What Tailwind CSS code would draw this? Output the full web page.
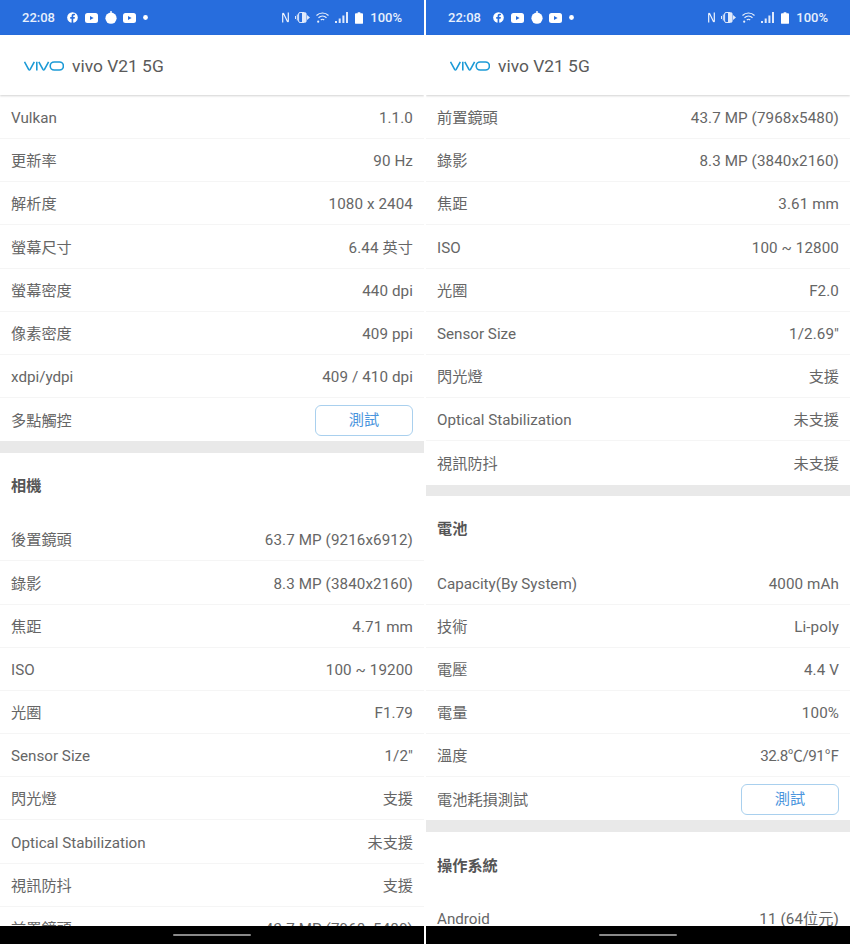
<!DOCTYPE html>
<html lang="zh-Hant">
<head>
  <meta charset="UTF-8" />
  <title>vivo V21 5G</title>
  <script src="https://cdn.jsdelivr.net/npm/@tailwindcss/browser@4"></script>
</head>
<body class="bg-white font-['Roboto','Noto_Sans_CJK_TC',sans-serif] text-[15.2px] text-[#666666]">
  <div class="flex w-[850px] h-[944px] gap-[2px] overflow-hidden">

    <!-- left phone -->
    <section class="relative w-[424px] h-[944px] overflow-hidden flex flex-col">
      <div class="h-[35px] shrink-0 bg-[#276ddd] text-white flex items-center justify-between px-[22px] text-[13px] font-medium">
        <div class="flex items-center">
          <span class="text-[#e8f0fc]">22:08</span>
          <div class="flex items-center ml-[12px]">
            <svg width="11" height="11" viewBox="0 0 12 12"><circle cx="6" cy="6" r="5.8" fill="#fff"/><path d="M6.800 12V7.300h1.500l.3-1.800H6.800V4.500c0-.6.2-.9.9-.9h1V2.100c-.3 0-.9-.1-1.400-.1C5.900 2 5 2.800 5 4.300v1.200H3.500v1.800H5V12z" fill="#276ddd"/></svg>
            <svg class="ml-[7px]" width="13" height="10" viewBox="0 0 13 10"><rect width="13" height="10" rx="2.500" fill="#fff"/><path d="M5 2.900v4.200L8.600 5z" fill="#276ddd"/></svg>
            <svg class="ml-[7px]" width="12" height="13" viewBox="0 0 12 13"><circle cx="6" cy="7.200" r="5.600" fill="#fff"/><rect x="5.300" y="0" width="1.400" height="2.500" fill="#fff"/></svg>
            <svg class="ml-[6px]" width="13" height="10" viewBox="0 0 13 10"><rect width="13" height="10" rx="2.500" fill="#fff"/><path d="M5 2.900v4.200L8.600 5z" fill="#276ddd"/></svg>
            <svg class="ml-[7px]" width="5" height="5" viewBox="0 0 5 5"><circle cx="2.500" cy="2.500" r="2.400" fill="#fff"/></svg>
          </div>
        </div>
        <div class="flex items-center">
          <svg width="7" height="11" viewBox="0 0 7 11" fill="none" stroke="#eef3fd" stroke-width="1.200"><path d="M.7 10.400V1.800a.5.500 0 0 1 .9-.3l3.800 8a.5.500 0 0 0 .9-.3V.6"/></svg>
          <svg class="ml-[6px]" width="15" height="11" viewBox="0 0 15 11" fill="#dfe9fb"><rect x="3.600" y="0.500" width="7.500" height="10" rx="1.500" fill="none" stroke="#dfe9fb"/><rect x="7" y="1" width="4" height="9"/><rect x="1.800" y="2.500" width="1" height="6"/><rect x="0" y="4" width="1" height="3"/><path d="M12 3l3 2.500L12 8z"/></svg>
          <svg class="ml-[6px]" width="13" height="11" viewBox="0 0 13 11" fill="none" stroke="#e8f0fc" stroke-width="1.200"><path d="M.5 3.500a8.500 8.500 0 0 1 12 0M2.500 5.700a6 6 0 0 1 8 0M4.800 7.900a2.800 2.800 0 0 1 3.400 0"/><circle cx="2.200" cy="9.700" r="1.100" fill="#e8f0fc" stroke="none"/></svg>
          <svg class="ml-[6px]" width="13" height="11" viewBox="0 0 13 11" fill="#dfe9fb"><rect x="0" y="9" width="2" height="2"/><rect x="3.700" y="6.500" width="2" height="4.500"/><rect x="7.400" y="3.500" width="2" height="7.500"/><rect x="11" y="0" width="2" height="11"/></svg>
          <svg class="ml-[7px]" width="8" height="12" viewBox="0 0 9 13" fill="#fff"><path d="M3 0h3v1.200h2a1 1 0 0 1 1 1V12a1 1 0 0 1-1 1H1a1 1 0 0 1-1-1V2.200a1 1 0 0 1 1-1h2z"/></svg>
          <span class="ml-[7px] text-[#e8f0fc]">100%</span>
        </div>
      </div>
      <header class="relative z-10 h-[60px] shrink-0 bg-white flex items-center pl-[24px] pt-[2px] shadow-[0_1px_2px_rgba(0,0,0,0.18)]">
        <svg width="40" height="10" viewBox="0 0 40 10" fill="none" stroke="#1b9ad6" stroke-width="1.600"><path d="M0.500 .8 L4.600 8.400 Q5.400 9.500 6.200 8.400 L10.300 .8"/><path d="M12.800 .8V9.400"/><path d="M14.800 .8 L18.900 8.400 Q19.700 9.500 20.500 8.400 L24.600 .8"/><rect x="26.200" y="1" width="13.200" height="8" rx="4"/></svg>
        <span class="ml-[8px] text-[17.400px] text-[#5a5a5a]">vivo V21 5G</span>
      </header>
      <main class="flex-1 overflow-hidden pt-[0.900px] [&>div]:pt-[3px]">
        <div class="flex justify-between items-center h-[43.200px] px-[11px] border-b border-[#f5f5f5]"><span>Vulkan</span><span class="tracking-[0.1px]">1.1.0</span></div>
        <div class="flex justify-between items-center h-[43.200px] px-[11px] border-b border-[#f5f5f5]"><span>更新率</span><span class="tracking-[0.1px]">90 Hz</span></div>
        <div class="flex justify-between items-center h-[43.200px] px-[11px] border-b border-[#f5f5f5]"><span>解析度</span><span class="tracking-[0.1px]">1080 x 2404</span></div>
        <div class="flex justify-between items-center h-[43.200px] px-[11px] border-b border-[#f5f5f5]"><span>螢幕尺寸</span><span class="tracking-[0.1px]">6.44 英寸</span></div>
        <div class="flex justify-between items-center h-[43.200px] px-[11px] border-b border-[#f5f5f5]"><span>螢幕密度</span><span class="tracking-[0.1px]">440 dpi</span></div>
        <div class="flex justify-between items-center h-[43.200px] px-[11px] border-b border-[#f5f5f5]"><span>像素密度</span><span class="tracking-[0.1px]">409 ppi</span></div>
        <div class="flex justify-between items-center h-[43.200px] px-[11px] border-b border-[#f5f5f5]"><span>xdpi/ydpi</span><span class="tracking-[0.1px]">409 / 410 dpi</span></div>
        <div class="flex justify-between items-center h-[43.200px] px-[11px]"><span>多點觸控</span><button class="w-[98px] h-[31px] -mt-[2px] pt-[1px] rounded-[6px] border border-[#a9d0ee] text-[#4a95dd]">測試</button></div>
        <div class="h-[11.400px] bg-[#e9e9e9]"></div>
        <h2 class="h-[65.400px] flex items-center px-[11px] pt-[2px] font-bold text-[#555555]">相機</h2>
        <div class="flex justify-between items-center h-[43.200px] px-[11px] border-b border-[#f5f5f5]"><span>後置鏡頭</span><span class="tracking-[0.1px]">63.7 MP (9216x6912)</span></div>
        <div class="flex justify-between items-center h-[43.200px] px-[11px] border-b border-[#f5f5f5]"><span>錄影</span><span class="tracking-[0.1px]">8.3 MP (3840x2160)</span></div>
        <div class="flex justify-between items-center h-[43.200px] px-[11px] border-b border-[#f5f5f5]"><span>焦距</span><span class="tracking-[0.1px]">4.71 mm</span></div>
        <div class="flex justify-between items-center h-[43.200px] px-[11px] border-b border-[#f5f5f5]"><span>ISO</span><span class="tracking-[0.1px]">100 ~ 19200</span></div>
        <div class="flex justify-between items-center h-[43.200px] px-[11px] border-b border-[#f5f5f5]"><span>光圈</span><span class="tracking-[0.1px]">F1.79</span></div>
        <div class="flex justify-between items-center h-[43.200px] px-[11px] border-b border-[#f5f5f5]"><span>Sensor Size</span><span class="tracking-[0.1px]">1/2"</span></div>
        <div class="flex justify-between items-center h-[43.200px] px-[11px] border-b border-[#f5f5f5]"><span>閃光燈</span><span>支援</span></div>
        <div class="flex justify-between items-center h-[43.200px] px-[11px] border-b border-[#f5f5f5]"><span>Optical Stabilization</span><span>未支援</span></div>
        <div class="flex justify-between items-center h-[43.200px] px-[11px] border-b border-[#f5f5f5]"><span>視訊防抖</span><span>支援</span></div>
        <div class="flex justify-between items-center h-[43.200px] px-[11px] border-b border-[#f5f5f5]"><span>前置鏡頭</span><span class="tracking-[0.1px]">43.7 MP (7968x5480)</span></div>
      </main>
      <div class="absolute bottom-0 inset-x-0 h-[18px] bg-black flex justify-center items-center"><div class="w-[78px] h-[2px] rounded-full bg-[#8a8a8a]"></div></div>
    </section>

    <!-- right phone -->
    <section class="relative w-[424px] h-[944px] overflow-hidden flex flex-col">
      <div class="h-[35px] shrink-0 bg-[#276ddd] text-white flex items-center justify-between px-[22px] text-[13px] font-medium">
        <div class="flex items-center">
          <span class="text-[#e8f0fc]">22:08</span>
          <div class="flex items-center ml-[12px]">
            <svg width="11" height="11" viewBox="0 0 12 12"><circle cx="6" cy="6" r="5.8" fill="#fff"/><path d="M6.800 12V7.300h1.500l.3-1.800H6.800V4.500c0-.6.2-.9.9-.9h1V2.100c-.3 0-.9-.1-1.400-.1C5.900 2 5 2.800 5 4.300v1.200H3.500v1.800H5V12z" fill="#276ddd"/></svg>
            <svg class="ml-[7px]" width="13" height="10" viewBox="0 0 13 10"><rect width="13" height="10" rx="2.500" fill="#fff"/><path d="M5 2.900v4.200L8.600 5z" fill="#276ddd"/></svg>
            <svg class="ml-[7px]" width="12" height="13" viewBox="0 0 12 13"><circle cx="6" cy="7.200" r="5.600" fill="#fff"/><rect x="5.300" y="0" width="1.400" height="2.500" fill="#fff"/></svg>
            <svg class="ml-[6px]" width="13" height="10" viewBox="0 0 13 10"><rect width="13" height="10" rx="2.500" fill="#fff"/><path d="M5 2.900v4.200L8.600 5z" fill="#276ddd"/></svg>
            <svg class="ml-[7px]" width="5" height="5" viewBox="0 0 5 5"><circle cx="2.500" cy="2.500" r="2.400" fill="#fff"/></svg>
          </div>
        </div>
        <div class="flex items-center">
          <svg width="7" height="11" viewBox="0 0 7 11" fill="none" stroke="#eef3fd" stroke-width="1.200"><path d="M.7 10.400V1.800a.5.500 0 0 1 .9-.3l3.800 8a.5.500 0 0 0 .9-.3V.6"/></svg>
          <svg class="ml-[6px]" width="15" height="11" viewBox="0 0 15 11" fill="#dfe9fb"><rect x="3.600" y="0.500" width="7.500" height="10" rx="1.500" fill="none" stroke="#dfe9fb"/><rect x="7" y="1" width="4" height="9"/><rect x="1.800" y="2.500" width="1" height="6"/><rect x="0" y="4" width="1" height="3"/><path d="M12 3l3 2.500L12 8z"/></svg>
          <svg class="ml-[6px]" width="13" height="11" viewBox="0 0 13 11" fill="none" stroke="#e8f0fc" stroke-width="1.200"><path d="M.5 3.500a8.500 8.500 0 0 1 12 0M2.500 5.700a6 6 0 0 1 8 0M4.800 7.900a2.800 2.800 0 0 1 3.400 0"/><circle cx="2.200" cy="9.700" r="1.100" fill="#e8f0fc" stroke="none"/></svg>
          <svg class="ml-[6px]" width="13" height="11" viewBox="0 0 13 11" fill="#dfe9fb"><rect x="0" y="9" width="2" height="2"/><rect x="3.700" y="6.500" width="2" height="4.500"/><rect x="7.400" y="3.500" width="2" height="7.500"/><rect x="11" y="0" width="2" height="11"/></svg>
          <svg class="ml-[7px]" width="8" height="12" viewBox="0 0 9 13" fill="#fff"><path d="M3 0h3v1.200h2a1 1 0 0 1 1 1V12a1 1 0 0 1-1 1H1a1 1 0 0 1-1-1V2.200a1 1 0 0 1 1-1h2z"/></svg>
          <span class="ml-[7px] text-[#e8f0fc]">100%</span>
        </div>
      </div>
      <header class="relative z-10 h-[60px] shrink-0 bg-white flex items-center pl-[24px] pt-[2px] shadow-[0_1px_2px_rgba(0,0,0,0.18)]">
        <svg width="40" height="10" viewBox="0 0 40 10" fill="none" stroke="#1b9ad6" stroke-width="1.600"><path d="M0.500 .8 L4.600 8.400 Q5.400 9.500 6.200 8.400 L10.300 .8"/><path d="M12.800 .8V9.400"/><path d="M14.800 .8 L18.900 8.400 Q19.700 9.500 20.500 8.400 L24.600 .8"/><rect x="26.200" y="1" width="13.200" height="8" rx="4"/></svg>
        <span class="ml-[8px] text-[17.400px] text-[#5a5a5a]">vivo V21 5G</span>
      </header>
      <main class="flex-1 overflow-hidden pt-[0.900px] [&>div]:pt-[3px]">
        <div class="flex justify-between items-center h-[43.200px] px-[11px] border-b border-[#f5f5f5]"><span>前置鏡頭</span><span class="tracking-[0.1px]">43.7 MP (7968x5480)</span></div>
        <div class="flex justify-between items-center h-[43.200px] px-[11px] border-b border-[#f5f5f5]"><span>錄影</span><span class="tracking-[0.1px]">8.3 MP (3840x2160)</span></div>
        <div class="flex justify-between items-center h-[43.200px] px-[11px] border-b border-[#f5f5f5]"><span>焦距</span><span class="tracking-[0.1px]">3.61 mm</span></div>
        <div class="flex justify-between items-center h-[43.200px] px-[11px] border-b border-[#f5f5f5]"><span>ISO</span><span class="tracking-[0.1px]">100 ~ 12800</span></div>
        <div class="flex justify-between items-center h-[43.200px] px-[11px] border-b border-[#f5f5f5]"><span>光圈</span><span class="tracking-[0.1px]">F2.0</span></div>
        <div class="flex justify-between items-center h-[43.200px] px-[11px] border-b border-[#f5f5f5]"><span>Sensor Size</span><span class="tracking-[0.1px]">1/2.69"</span></div>
        <div class="flex justify-between items-center h-[43.200px] px-[11px] border-b border-[#f5f5f5]"><span>閃光燈</span><span>支援</span></div>
        <div class="flex justify-between items-center h-[43.200px] px-[11px] border-b border-[#f5f5f5]"><span>Optical Stabilization</span><span>未支援</span></div>
        <div class="flex justify-between items-center h-[43.200px] px-[11px]"><span>視訊防抖</span><span>未支援</span></div>
        <div class="h-[11.400px] bg-[#e9e9e9]"></div>
        <h2 class="h-[65.400px] flex items-center px-[11px] pt-[2px] font-bold text-[#555555]">電池</h2>
        <div class="flex justify-between items-center h-[43.200px] px-[11px] border-b border-[#f5f5f5]"><span>Capacity(By System)</span><span class="tracking-[0.1px]">4000 mAh</span></div>
        <div class="flex justify-between items-center h-[43.200px] px-[11px] border-b border-[#f5f5f5]"><span>技術</span><span class="tracking-[0.1px]">Li-poly</span></div>
        <div class="flex justify-between items-center h-[43.200px] px-[11px] border-b border-[#f5f5f5]"><span>電壓</span><span class="tracking-[0.1px]">4.4 V</span></div>
        <div class="flex justify-between items-center h-[43.200px] px-[11px] border-b border-[#f5f5f5]"><span>電量</span><span class="tracking-[0.1px]">100%</span></div>
        <div class="flex justify-between items-center h-[43.200px] px-[11px] border-b border-[#f5f5f5]"><span>溫度</span><span class="tracking-[-0.5px]">32.8℃/91℉</span></div>
        <div class="flex justify-between items-center h-[43.200px] px-[11px]"><span>電池耗損測試</span><button class="w-[98px] h-[31px] -mt-[2px] pt-[1px] rounded-[6px] border border-[#a9d0ee] text-[#4a95dd]">測試</button></div>
        <div class="h-[11.400px] bg-[#e9e9e9]"></div>
        <h2 class="h-[65.400px] flex items-center px-[11px] pt-[4px] font-bold text-[#555555]">操作系統</h2>
        <div class="flex justify-between items-center h-[43.200px] px-[11px] border-b border-[#f5f5f5]"><span>Android</span><span class="tracking-[0.1px]">11 (64位元)</span></div>
      </main>
      <div class="absolute bottom-0 inset-x-0 h-[18px] bg-black flex justify-center items-center"><div class="w-[78px] h-[2px] rounded-full bg-[#8a8a8a]"></div></div>
    </section>

  </div>
</body>
</html>
